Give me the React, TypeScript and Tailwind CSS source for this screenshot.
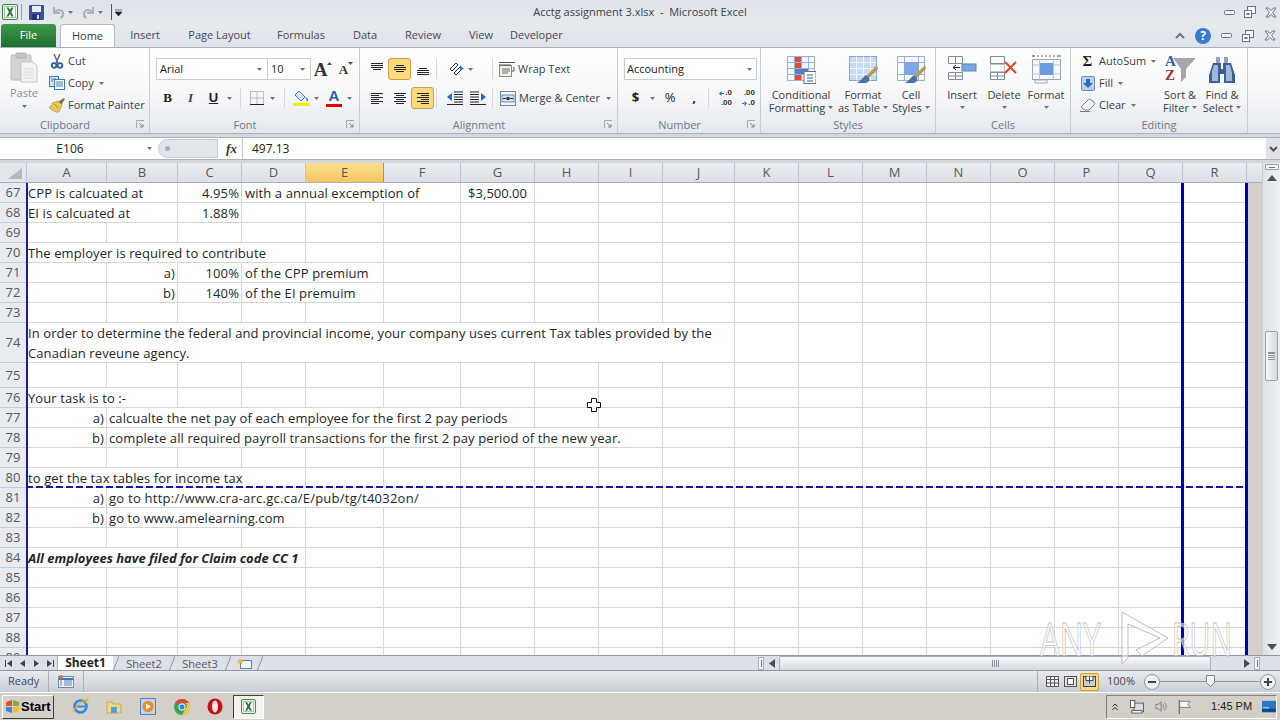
import type { ReactNode } from "react";

const COLS = ["A", "B", "C", "D", "E", "F", "G", "H", "I", "J", "K", "L", "M", "N", "O", "P", "Q", "R"];

type Cell = { text?: ReactNode; span?: number; align?: "r"; extra?: string };
type RowDef = { n: number; h: string; cells?: Record<number, Cell> };

const ROWS: RowDef[] = [
  {
    n: 67,
    h: "h-[20px]",
    cells: {
      0: { text: "CPP is calcuated at", span: 2 },
      2: { text: "4.95%", align: "r" },
      3: { text: "with a annual excemption of", span: 3, extra: "pl-[3px]" },
      6: {
        text: (
          <span className="flex justify-between pl-[6px] pr-[5px] tracking-normal">
            <span>$</span>
            <span>3,500.00</span>
          </span>
        ),
      },
    },
  },
  { n: 68, h: "h-[20px]", cells: { 0: { text: "EI is calcuated at", span: 2 }, 2: { text: "1.88%", align: "r" } } },
  { n: 69, h: "h-[20px]" },
  { n: 70, h: "h-[20px]", cells: { 0: { text: "The employer is required to contribute", span: 4 } } },
  {
    n: 71,
    h: "h-[20px]",
    cells: {
      0: { span: 1 },
      1: { text: "a)", align: "r" },
      2: { text: "100%", align: "r" },
      3: { text: "of the CPP premium", span: 2, extra: "pl-[3px]" },
    },
  },
  {
    n: 72,
    h: "h-[20px]",
    cells: {
      1: { text: "b)", align: "r" },
      2: { text: "140%", align: "r" },
      3: { text: "of the EI premuim", span: 2, extra: "pl-[3px]" },
    },
  },
  { n: 73, h: "h-[20px]" },
  {
    n: 74,
    h: "h-[40px]",
    cells: {
      0: {
        text: (
          <>
            In order to determine the federal and provincial income, your company uses current Tax tables provided by the
            <br />
            Canadian reveune agency.
          </>
        ),
        span: 10,
      },
    },
  },
  { n: 75, h: "h-[25px]" },
  { n: 76, h: "h-[20px]", cells: { 0: { text: "Your task is to :-", span: 2 } } },
  {
    n: 77,
    h: "h-[20px]",
    cells: {
      0: { text: "a)", align: "r" },
      1: { text: "calcualte the net pay of each employee for the first 2 pay periods", span: 6, extra: "pl-[2px]" },
    },
  },
  {
    n: 78,
    h: "h-[20px]",
    cells: {
      0: { text: "b)", align: "r" },
      1: { text: "complete all required payroll transactions for the first 2 pay period of the new year.", span: 8, extra: "pl-[2px]" },
    },
  },
  { n: 79, h: "h-[20px]" },
  { n: 80, h: "h-[20px]", cells: { 0: { text: "to get the tax tables for income tax", span: 4 } } },
  {
    n: 81,
    h: "h-[20px]",
    cells: {
      0: { text: "a)", align: "r" },
      1: { text: "go to http://www.cra-arc.gc.ca/E/pub/tg/t4032on/", span: 5, extra: "pl-[2px] tracking-[0.25px]" },
    },
  },
  {
    n: 82,
    h: "h-[20px]",
    cells: {
      0: { text: "b)", align: "r" },
      1: { text: "go to www.amelearning.com", span: 3, extra: "pl-[2px]" },
    },
  },
  { n: 83, h: "h-[20px]" },
  { n: 84, h: "h-[20px]", cells: { 0: { text: "All employees have filed for Claim code CC 1", span: 4, extra: "font-bold italic tracking-normal" } } },
  { n: 85, h: "h-[20px]" },
  { n: 86, h: "h-[20px]" },
  { n: 87, h: "h-[20px]" },
  { n: 88, h: "h-[20px]" },
  { n: 89, h: "h-[20px]" },
];

const GRID_COLS = "grid grid-rows-[minmax(0,1fr)] grid-cols-[27px_80px_71px_64px_64px_78px_77px_74px_64px_64px_72px_64px_64px_64px_64px_64px_64px_64px_64px]";

function Drop({ className = "" }: { className?: string }) {
  return (
    <svg width="5" height="3" viewBox="0 0 5 3" className={className}>
      <path d="M0 0h5L2.5 3z" fill="#6b7280" />
    </svg>
  );
}

function Launcher() {
  return (
    <svg width="9" height="9" viewBox="0 0 9 9">
      <path d="M.5 8V.5H8" fill="none" stroke="#a3abb5" />
      <path d="M3 3l4 4M7 4v3H4" fill="none" stroke="#7f8893" />
    </svg>
  );
}

function ExcelIcon({ size = 16 }: { size?: number }) {
  return (
    <svg width={size} height={size} viewBox="0 0 16 16">
      <rect x=".5" y=".5" width="15" height="15" rx="1.5" fill="#eef5ea" stroke="#3d7f45" />
      <rect x="2.5" y="2.5" width="11" height="11" fill="#fff" stroke="#9cc39e" />
      <path d="M4.5 3.5h2.2L8 6l1.4-2.5h2.1L9.2 8l2.4 4.5H9.4L8 9.8l-1.5 2.7H4.4L6.9 8z" fill="#1f7a31" />
    </svg>
  );
}

function SaveIcon() {
  return (
    <svg width="15" height="15" viewBox="0 0 15 15">
      <rect width="15" height="15" rx="1" fill="#3f4f9f" />
      <rect x="3" y="1" width="9" height="6" fill="#e6ecf6" />
      <rect x="3" y="9" width="8" height="6" fill="#2a3570" />
      <rect x="8" y="10" width="2" height="4" fill="#cbd5e8" />
    </svg>
  );
}

function UndoIcon({ flip = false }: { flip?: boolean }) {
  return (
    <svg width="13" height="13" viewBox="0 0 13 13" className={flip ? "-scale-x-100" : ""}>
      <path d="M2 1v6h6M2.5 6.5C5 3 11 3 11 8c0 2-1 3.5-2.5 4" fill="none" stroke="#a8b1bd" strokeWidth="2" />
    </svg>
  );
}

function WinMin() {
  return (
    <svg width="11" height="5" viewBox="0 0 11 5">
      <rect x=".5" y=".5" width="10" height="4" rx="1" fill="#f5f6f8" stroke="#6b7480" />
    </svg>
  );
}

function WinRestore() {
  return (
    <svg width="12" height="12" viewBox="0 0 12 12">
      <rect x="3.5" y=".5" width="8" height="7" fill="#f5f6f8" stroke="#6b7480" />
      <rect x=".5" y="4.5" width="7" height="7" fill="#f5f6f8" stroke="#6b7480" />
      <rect x="2.5" y="7" width="3" height="2" fill="#6b7480" />
    </svg>
  );
}

function WinClose() {
  return (
    <svg width="12" height="11" viewBox="0 0 12 11">
      <path d="M1 1h2.5L6 3.6 8.5 1H11L7.6 5.5 11 10H8.5L6 7.4 3.5 10H1l3.4-4.5z" fill="#f3f4f6" stroke="#6b7480" />
    </svg>
  );
}

function Lines({ rows, size = 14 }: { rows: [number, number, number][]; size?: number }) {
  return (
    <svg width={size} height={size} viewBox="0 0 14 14">
      {rows.map(([a, b, y], i) => (
        <path key={i} d={`M${a} ${y + 0.5}H${b}`} stroke="#22262b" />
      ))}
    </svg>
  );
}

const TOP: [number, number, number][] = [[1, 13, 1], [1, 13, 3], [1, 13, 5], [3, 11, 7]];
const MID: [number, number, number][] = [[3, 11, 3], [1, 13, 5], [1, 13, 7], [3, 11, 9]];
const BOT: [number, number, number][] = [[3, 11, 6], [1, 13, 8], [1, 13, 10], [1, 13, 12]];
const LEFT: [number, number, number][] = [[1, 13, 2], [1, 9, 4], [1, 13, 6], [1, 9, 8], [1, 13, 10], [1, 9, 12]];
const CENTER: [number, number, number][] = [[1, 13, 2], [3, 11, 4], [1, 13, 6], [3, 11, 8], [1, 13, 10], [3, 11, 12]];
const RIGHT: [number, number, number][] = [[1, 13, 2], [5, 13, 4], [1, 13, 6], [5, 13, 8], [1, 13, 10], [5, 13, 12]];

function PasteIcon() {
  return (
    <svg width="28" height="31" viewBox="0 0 28 31">
      <rect x="1" y="3" width="20" height="25" rx="1" fill="#d3d3d1" stroke="#bdbdbb" />
      <rect x="6" y="1" width="10" height="5" rx="1" fill="#c4c4c2" stroke="#b0b0ae" />
      <path d="M11 10h12l4 4v16H11z" fill="#f3f3f3" stroke="#c5c5c5" />
      <path d="M14 17h10M14 20h10M14 23h10M14 26h10" stroke="#d8d8d8" />
    </svg>
  );
}

function CutIcon() {
  return (
    <svg width="14" height="15" viewBox="0 0 14 15">
      <path d="M4 0l4 9M10 0L6 9" stroke="#5a6a80" strokeWidth="1.5" />
      <circle cx="4" cy="11.5" r="2.3" fill="none" stroke="#2c5ca8" strokeWidth="1.8" />
      <circle cx="10" cy="11.5" r="2.3" fill="none" stroke="#2c5ca8" strokeWidth="1.8" />
    </svg>
  );
}

function CopyIcon() {
  return (
    <svg width="16" height="14" viewBox="0 0 16 14">
      <rect x=".5" y=".5" width="9" height="10" fill="#dbe8f8" stroke="#3f76b8" />
      <rect x="5.5" y="3.5" width="10" height="10" fill="#fff" stroke="#3f76b8" />
      <path d="M7 6h7M7 8h7M7 10h7M2 3h5M2 5h2" stroke="#3f76b8" />
    </svg>
  );
}

function BrushIcon() {
  return (
    <svg width="16" height="15" viewBox="0 0 16 15">
      <path d="M9 4l3 3 4-6-1-1z" fill="#8a6a2c" />
      <path d="M3 5l6-2 4 4-3 7C6 15 1 11 0 9c2 0 3-2 3-4z" fill="#e8c65c" stroke="#a9873a" strokeWidth=".6" />
      <path d="M5 6l4 4" stroke="#a9873a" />
    </svg>
  );
}

function BordersIcon() {
  return (
    <svg width="14" height="14" viewBox="0 0 14 14">
      <path d="M.5 .5h13v13M.5 .5v13M7 .5v13M.5 7h13" stroke="#8a8a8a" strokeDasharray="1 1" fill="none" />
      <path d="M0 13.5h14" stroke="#222" />
    </svg>
  );
}

function FillIcon() {
  return (
    <svg width="17" height="16" viewBox="0 0 17 16">
      <path d="M6 1l6 6-4 4-6-6z" fill="#dbe7f5" stroke="#56739a" />
      <path d="M12 7c2 1 3 2 3 3.5 0 1-1 1-1.3 0-.3-1.3-1-2-1.7-3.5z" fill="#2d6bc0" />
      <rect y="13" width="17" height="3" fill="#f3f000" />
    </svg>
  );
}

function TextColorIcon() {
  return (
    <div className="relative flex h-[18px] w-[16px] flex-col items-center">
      <span className="text-[15px] font-bold leading-[14px] text-[#2f5fa8] [font-family:'Liberation_Sans',sans-serif]">A</span>
      <span className="mt-[1px] h-[4px] w-[16px] bg-[#e00000]" />
    </div>
  );
}

function OrientIcon() {
  return (
    <svg width="17" height="14" viewBox="0 0 17 14">
      <path d="M1 7l6-6 2 2-6 6zM5 11l6-6 2 2-6 6z" fill="none" stroke="#333" />
      <path d="M11 3l4 4-4 1z" fill="#3f76b8" />
    </svg>
  );
}

function WrapIcon() {
  return (
    <svg width="17" height="15" viewBox="0 0 17 15">
      <rect x=".5" y="3.5" width="12" height="11" fill="#f3efe1" stroke="#8a8a8a" />
      <path d="M0 .5h16M0 3h12" stroke="#555" />
      <path d="M3 7h8M3 9h8M3 11h6" stroke="#6f6f6f" />
      <path d="M15 5v4h-2" fill="none" stroke="#2c5ca8" />
    </svg>
  );
}

function IndentIcon({ flip = false }: { flip?: boolean }) {
  return (
    <svg width="16" height="14" viewBox="0 0 16 14" className={flip ? "-scale-x-100" : ""}>
      <path d="M7 1h9M7 3.5h9M7 6h9M7 8.5h9M7 11h9M0 13.5h16" stroke="#22262b" />
      <path d="M0 6l5-4v8z" fill="#2c6bc4" />
    </svg>
  );
}

function MergeIcon() {
  return (
    <svg width="16" height="15" viewBox="0 0 16 15">
      <rect x=".5" y=".5" width="15" height="14" fill="#f5f8fc" stroke="#6f8bb0" />
      <rect x="2" y="4" width="12" height="7" fill="#d5e3f5" stroke="#6f8bb0" />
      <path d="M3 7.5h3M13 7.5h-3" stroke="#223" />
      <rect x="6.5" y="6" width="3" height="3" fill="#333" />
    </svg>
  );
}

function DecimalIcon({ more }: { more: boolean }) {
  const arrow = (
    <svg width="5" height="5" viewBox="0 0 5 5" className="mr-[1px]">
      <path d={more ? "M0 2.5L2.5 0v5zM2 2h3v1H2z" : "M5 2.5L2.5 0v5zM0 2h3v1H0z"} fill="#2c6bc4" />
    </svg>
  );
  return (
    <span className="flex w-[16px] flex-col items-end text-[8px] font-bold leading-[10px] text-[#333] [font-family:'Liberation_Sans',sans-serif]">
      <span className="flex items-center">
        {more && arrow}
        {more ? ".0" : ".00"}
      </span>
      <span className="flex items-center">
        {!more && arrow}
        {more ? ".00" : ".0"}
      </span>
    </span>
  );
}

function GridBase({ children }: { children?: ReactNode }) {
  return (
    <svg width="29" height="30" viewBox="0 0 29 30">
      {children}
    </svg>
  );
}

function ConditionalIcon() {
  return (
    <GridBase>
      <path d="M.5 2.5h27v24H.5zM.5 8.5h27M.5 14.5h27M.5 20.5h27M7.5 2.5v24M14.5 2.5v24M21.5 2.5v24" fill="#f5f8fc" stroke="#9cb1cd" />
      <rect x="8" y="3" width="6" height="5" fill="#e04a3a" />
      <rect x="8" y="9" width="6" height="5" fill="#e04a3a" />
      <rect x="8" y="15" width="13" height="5" fill="#4f7fd0" />
      <rect x="8" y="21" width="6" height="5" fill="#e04a3a" />
      <rect x="17" y="17.5" width="12" height="12" fill="#fff" stroke="#6b7280" />
      <path d="M20 21h6M20 24h6M20 27h6" stroke="#2c5ca8" />
    </GridBase>
  );
}

function TableBrushIcon() {
  return (
    <GridBase>
      <rect x=".5" y="2.5" width="27" height="24" fill="#c7dbf4" stroke="#88a5cc" />
      <path d="M.5 8.5h27M.5 14.5h27M.5 20.5h27M7.5 2.5v24M14.5 2.5v24M21.5 2.5v24" stroke="#f3f7fc" />
      <path d="M28 11L17 22l2 3L29 15z" fill="#b59a5c" />
      <path d="M17 21c-3 2-4 5-9 8h9c3-1 4-3 3-5z" fill="#4e6fa8" />
    </GridBase>
  );
}

function CellStyleIcon() {
  return (
    <GridBase>
      <path d="M.5 2.5h27v24H.5zM.5 8.5h27M.5 20.5h27M7.5 2.5v24M21.5 2.5v24" fill="#f5f8fc" stroke="#9cb1cd" />
      <rect x="7" y="8" width="15" height="13" fill="#7fa6e4" />
      <path d="M28 11L17 22l2 3L29 15z" fill="#b59a5c" />
      <path d="M17 21c-3 2-4 5-9 8h9c3-1 4-3 3-5z" fill="#4e6fa8" />
    </GridBase>
  );
}

function InsertIcon() {
  return (
    <GridBase>
      <path d="M.5 2.5h14v7H.5zM.5 18.5h14v7H.5zM7.5 2.5v7M7.5 18.5v7M.5 22h14" fill="#fafbfd" stroke="#7f8c9c" />
      <rect x="14" y="10" width="14" height="7" fill="#7fa6dc" stroke="#5f82b5" />
      <path d="M12 13.5H5M8 11l-3 2.5L8 16" fill="none" stroke="#222" />
    </GridBase>
  );
}

function DeleteIcon() {
  return (
    <GridBase>
      <path d="M.5 2.5h14v7H.5zM.5 18.5h14v7H.5zM7.5 18.5v7M.5 22h14" fill="#fafbfd" stroke="#7f8c9c" />
      <rect x=".5" y="10.5" width="14" height="7" fill="#fff" stroke="#7f8c9c" strokeDasharray="1 1" />
      <path d="M15 8l11 11M26 8L15 19" stroke="#e0402e" strokeWidth="2" />
    </GridBase>
  );
}

function FormatIcon() {
  return (
    <GridBase>
      <path d="M1 1v2M28 1v2M1 2h27" stroke="#555" strokeDasharray="2 2" />
      <rect x=".5" y="5.5" width="28" height="20" fill="#f5f8fc" stroke="#9aa6b5" />
      <path d="M7.5 5.5v20M21.5 5.5v20M.5 11h28M.5 20h28" stroke="#bcc6d2" />
      <rect x="8" y="9" width="13" height="12" fill="#6f9be0" />
      <path d="M3 26h12v3H3z" fill="#f5f8fc" stroke="#9aa6b5" />
    </GridBase>
  );
}

function SumIcon() {
  return <span className="text-[15px] font-bold leading-none text-[#1f1f1f] [font-family:'Liberation_Serif',serif]">Σ</span>;
}

function FillDownIcon() {
  return (
    <svg width="14" height="15" viewBox="0 0 14 15">
      <rect x=".5" y=".5" width="13" height="14" rx="1" fill="#b9d0ee" stroke="#6b8db9" />
      <path d="M5 3h4v4h3l-5 5-5-5h3z" fill="#2e69c0" />
    </svg>
  );
}

function EraserIcon() {
  return (
    <svg width="16" height="14" viewBox="0 0 16 14">
      <path d="M1 9l7-7c1-1 2-1 3 0l3 2c1 1 1 2 0 3l-5 5H5z" fill="#f4f4f6" stroke="#757c87" />
      <path d="M0 13.5h10" stroke="#757c87" />
    </svg>
  );
}

function SortIcon() {
  return (
    <svg width="32" height="30" viewBox="0 0 32 30">
      <path d="M9 4h23l-10 11v8l-5 5V15z" fill="#a5a7aa" />
      <text x="1" y="12" fontSize="15" fontWeight="700" fill="#3660a8" fontFamily="Liberation Serif, serif">A</text>
      <text x="1" y="26" fontSize="15" fontWeight="700" fill="#8f3a36" fontFamily="Liberation Serif, serif">Z</text>
    </svg>
  );
}

function BinocularsIcon() {
  return (
    <svg width="28" height="28" viewBox="0 0 28 28">
      <path d="M8 1h4v6H8zM16 1h4v6h-4z" fill="#8ca3c4" />
      <path d="M5 7h8v6h2V7h8l4 12v8H16v-9h-4v9H1v-8z" fill="#3d5f95" />
      <path d="M6 9h4v16H4V15z" fill="#9fb7d8" />
      <path d="M18 9h4l2 8v8h-6z" fill="#9fb7d8" />
    </svg>
  );
}

function SmallBtn({ icon, label, arrow = false }: { icon: ReactNode; label: string; arrow?: boolean }) {
  return (
    <div className="flex h-[22px] items-center">
      <span className="flex w-[17px] justify-center">{icon}</span>
      <span className="ml-[3px] whitespace-nowrap">{label}</span>
      {arrow && <Drop className="ml-[5px]" />}
    </div>
  );
}

function BigBtn({ w, icon, top, bottom, arrow = true }: { w: string; icon: ReactNode; top: string; bottom?: string; arrow?: boolean }) {
  return (
    <div className={`flex flex-col items-center ${w}`}>
      <div className="flex h-[40px] items-end justify-center pb-[4px]">{icon}</div>
      <span className="h-[13px] whitespace-nowrap leading-[13px]">{top}</span>
      <span className="flex h-[13px] items-center gap-[3px] whitespace-nowrap leading-[13px]">
        {bottom}
        {arrow && <Drop />}
      </span>
    </div>
  );
}

function Group({ w, label, launcher = false, pad, children }: { w: string; label: string; launcher?: boolean; pad?: string; children: ReactNode }) {
  return (
    <div className={`relative flex flex-col border-r border-[#c6ccd4] ${w}`}>
      <div className={`h-[70px] ${pad ?? ""}`}>{children}</div>
      <div className={`relative flex h-[16px] items-center justify-center text-[#6e7887] ${launcher ? "pr-[19px]" : ""}`}>
        {label}
        {launcher && (
          <span className="absolute right-[4px] top-[3px] flex">
            <Launcher />
          </span>
        )}
      </div>
    </div>
  );
}

function Sep({ h = "h-[20px]", mx = "mx-[5px]" }: { h?: string; mx?: string }) {
  return <span className={`w-px bg-[#d5d9df] ${h} ${mx}`} />;
}

function Box({ w, on = false, children }: { w: string; on?: boolean; children: ReactNode }) {
  return (
    <span className={`flex h-[22px] items-center justify-center ${w} ${on ? "rounded-[3px] border border-[#d0a040] bg-[#fbd97f]" : ""}`}>
      {children}
    </span>
  );
}

function Ribbon() {
  return (
    <div className="flex h-[87px] border-b border-t border-[#aab2bc] bg-gradient-to-b from-[#ffffff] via-[#f7f8fa] to-[#e4e8ed] text-[11px] text-[#3a3f45]">
      <Group w="w-[150px]" label="Clipboard" launcher pad="flex">
        <div className="flex w-[48px] flex-col items-center pt-[4px] text-[#8a8f96]">
          <PasteIcon />
          <span className="mt-[3px] leading-[14px]">Paste</span>
          <Drop className="mt-[5px]" />
        </div>
        <div className="flex flex-col pt-[2px]">
          <SmallBtn icon={<CutIcon />} label="Cut" />
          <SmallBtn icon={<CopyIcon />} label="Copy" arrow />
          <SmallBtn icon={<BrushIcon />} label="Format Painter" />
        </div>
      </Group>

      <Group w="w-[210px]" label="Font" launcher pad="flex flex-col pl-[6px] pt-[10px]">
        <div className="flex h-[22px] items-center">
          <div className="flex h-[22px] w-[112px] items-center justify-between border border-[#c8ccd2] bg-white pl-[3px] pr-[5px] text-[#222]">
            Arial
            <Drop />
          </div>
          <div className="-ml-px flex h-[22px] w-[44px] items-center justify-between border border-[#c8ccd2] bg-white pl-[3px] pr-[5px] text-[#222]">
            10
            <Drop />
          </div>
          <span className="flex w-[24px] items-start justify-center text-[19px] font-bold leading-none text-[#333] [font-family:'Liberation_Serif',serif]">
            A
            <svg width="5" height="3" viewBox="0 0 5 3" className="mt-[2px]">
              <path d="M0 3h5L2.5 0z" fill="#4a5058" />
            </svg>
          </span>
          <span className="flex w-[22px] items-start justify-center text-[13px] font-bold leading-none text-[#333] [font-family:'Liberation_Serif',serif]">
            A
            <svg width="5" height="3" viewBox="0 0 5 3" className="mt-[-1px]">
              <path d="M0 0h5L2.5 3z" fill="#4a5058" />
            </svg>
          </span>
        </div>
        <div className="mt-[7px] flex h-[22px] items-center">
          <Box w="w-[23px]">
            <b className="text-[13px] text-[#222] [font-family:'Liberation_Serif',serif]">B</b>
          </Box>
          <Box w="w-[23px]">
            <i className="text-[13px] font-bold text-[#444] [font-family:'Liberation_Serif',serif]">I</i>
          </Box>
          <Box w="w-[23px]">
            <b className="text-[13px] text-[#222] underline [font-family:'Liberation_Sans',sans-serif]">U</b>
          </Box>
          <Drop className="ml-[2px]" />
          <Sep mx="ml-[8px] mr-[5px]" />
          <span className="flex w-[22px] justify-center">
            <BordersIcon />
          </span>
          <Drop className="ml-[2px]" />
          <Sep mx="ml-[9px] mr-[4px]" />
          <span className="flex w-[24px] justify-center">
            <FillIcon />
          </span>
          <Drop className="ml-[1px]" />
          <span className="ml-[5px] flex w-[20px] justify-center">
            <TextColorIcon />
          </span>
          <Drop className="ml-[3px]" />
        </div>
      </Group>

      <Group w="w-[258px]" label="Alignment" launcher pad="flex flex-col pl-[5px] pt-[10px]">
        <div className="flex h-[22px] items-center">
          <Box w="w-[23px]">
            <Lines rows={TOP} />
          </Box>
          <Box w="w-[23px]" on>
            <Lines rows={MID} />
          </Box>
          <Box w="w-[23px]">
            <Lines rows={BOT} />
          </Box>
          <Sep mx="ml-[2px] mr-[12px]" />
          <OrientIcon />
          <Drop className="ml-[2px]" />
          <Sep mx="ml-[19px] mr-[6px]" />
          <span className="flex items-center gap-[2px]">
            <WrapIcon />
            <span>Wrap Text</span>
          </span>
        </div>
        <div className="mt-[7px] flex h-[22px] items-center">
          <Box w="w-[23px]">
            <Lines rows={LEFT} />
          </Box>
          <Box w="w-[23px]">
            <Lines rows={CENTER} />
          </Box>
          <Box w="w-[23px]" on>
            <Lines rows={RIGHT} />
          </Box>
          <Sep mx="ml-[2px] mr-[10px]" />
          <IndentIcon />
          <span className="ml-[7px]">
            <IndentIcon flip />
          </span>
          <Sep mx="ml-[6px] mr-[7px]" />
          <span className="flex items-center gap-[3px]">
            <MergeIcon />
            <span>Merge &amp; Center</span>
            <Drop className="ml-[3px]" />
          </span>
        </div>
      </Group>

      <Group w="w-[143px]" label="Number" launcher pad="flex flex-col pl-[6px] pt-[10px]">
        <div className="flex h-[22px] w-[133px] items-center justify-between border border-[#c8ccd2] bg-white pl-[2px] pr-[4px] text-[#222]">
          Accounting
          <Drop />
        </div>
        <div className="mt-[7px] flex h-[22px] items-center text-[#222]">
          <b className="w-[23px] text-center text-[13px]">$</b>
          <Drop className="ml-[3px]" />
          <b className="ml-[5px] w-[20px] text-center text-[13px] font-normal">%</b>
          <b className="ml-[4px] w-[20px] text-center text-[13px]">,</b>
          <Sep mx="ml-[4px] mr-[7px]" />
          <DecimalIcon more />
          <span className="ml-[7px]">
            <DecimalIcon more={false} />
          </span>
        </div>
      </Group>

      <Group w="w-[175px]" label="Styles" pad="flex pl-[6px]">
        <BigBtn w="w-[68px]" icon={<ConditionalIcon />} top="Conditional" bottom="Formatting" />
        <BigBtn w="w-[56px]" icon={<TableBrushIcon />} top="Format" bottom="as Table" />
        <BigBtn w="w-[40px]" icon={<CellStyleIcon />} top="Cell" bottom="Styles" />
      </Group>

      <Group w="w-[135px]" label="Cells" pad="flex pl-[5px]">
        <BigBtn w="w-[42px]" icon={<InsertIcon />} top="Insert" />
        <BigBtn w="w-[42px]" icon={<DeleteIcon />} top="Delete" />
        <BigBtn w="w-[42px]" icon={<FormatIcon />} top="Format" />
      </Group>

      <Group w="w-[177px]" label="Editing" pad="flex pl-[8px]">
        <div className="flex w-[81px] flex-col pt-[2px]">
          <SmallBtn icon={<SumIcon />} label="AutoSum" arrow />
          <SmallBtn icon={<FillDownIcon />} label="Fill" arrow />
          <SmallBtn icon={<EraserIcon />} label="Clear" arrow />
        </div>
        <BigBtn w="w-[40px]" icon={<SortIcon />} top="Sort &" bottom="Filter" />
        <div className="w-[2px]" />
        <BigBtn w="w-[40px]" icon={<BinocularsIcon />} top="Find &" bottom="Select" />
      </Group>
    </div>
  );
}

function Sheet() {
  return (
    <div className="relative flex-1 overflow-hidden bg-[#d4d0c8] text-[13px] text-[#22262b]">
      <div className={`${GRID_COLS} h-[20px] border-b border-[#a9b0b9] bg-gradient-to-b from-[#eaedf1] to-[#dce0e6]`}>
        <div className="flex items-end justify-end border-r border-[#bcc3cc] bg-[#e3e6eb] pb-[3px] pr-[4px]">
          <svg width="16" height="11" viewBox="0 0 16 11">
            <path d="M16 0v11H2z" fill="#b3b9c1" />
          </svg>
        </div>
        {COLS.map((c) => (
          <div
            key={c}
            className={
              c === "E"
                ? "flex items-center justify-center border-r border-[#c28f2e] bg-gradient-to-b from-[#fbe08e] to-[#f5c45e] text-[#555]"
                : "flex items-center justify-center border-r border-[#bcc3cc] text-[#55595f]"
            }
          >
            {c}
          </div>
        ))}
      </div>
      {ROWS.map((r) => (
        <div key={r.n} className={`relative ${GRID_COLS} ${r.h}`}>
          <div className="flex items-center justify-center border-b border-r border-[#c5cbd3] bg-[#e8ebef] pt-[1px] text-[#55595f]">{r.n}</div>
          {COLS.map((_, i) => {
            const cell = r.cells?.[i];
            const span = cell?.span ?? 1;
            let covered = false;
            for (let j = 0; j < i; j++) {
              const prev = r.cells?.[j];
              if (prev && j + (prev.span ?? 1) > i) covered = true;
            }
            if (covered) return null;
            return (
              <div
                key={i}
                style={span > 1 ? { gridColumn: `span ${span}` } : undefined}
                className={`flex flex-col justify-center whitespace-nowrap border-b border-r border-[#d6d6d6] bg-white pl-[1px] pr-[2px] leading-[20px] tracking-[0.1px] ${cell?.align === "r" ? "text-right" : ""} ${cell?.extra ?? ""}`}
              >
                <div>{cell?.text}</div>
              </div>
            );
          })}
          {r.n === 80 && (
            <div className="absolute bottom-0 left-[26px] h-[2px] w-[1220px] [background:repeating-linear-gradient(90deg,#1a1a9c_0_7px,transparent_7px_10px)]" />
          )}
        </div>
      ))}
      {/* page break lines */}
      <div className="absolute bottom-0 left-[26px] top-[20px] w-[2px] bg-[#1a1a9c]" />
      <div className="absolute bottom-0 left-[1181px] top-[20px] w-[3px] bg-[#0000c0]" />
      <div className="absolute bottom-0 left-[1245px] top-[20px] w-[3px] bg-[#0000c0]" />
    </div>
  );
}

function VScroll() {
  return (
    <div className="flex w-[18px] flex-col items-center border-l border-[#c9ced5] bg-gradient-to-r from-[#dfe3e8] to-[#eef0f3]">
      <span className="mt-[1px] flex h-[6px] w-[14px] items-center justify-center rounded-[1px] border border-[#9aa3ad] bg-[#f2f4f7]">
        <span className="h-px w-[6px] bg-[#777]" />
      </span>
      <svg width="10" height="6" viewBox="0 0 10 6" className="mt-[5px]">
        <path d="M0 6l5-6 5 6z" fill="#4a5058" />
      </svg>
      <div className="mt-[150px] flex h-[50px] w-[13px] items-center justify-center rounded-[2px] border border-[#9aa3ad] bg-gradient-to-r from-[#f7f8fa] to-[#d5dae1]">
        <span className="h-[8px] w-[7px] border-y border-[#8a929c] [background:repeating-linear-gradient(#8a929c_0_1px,transparent_1px_2px)]" />
      </div>
      <div className="flex-1" />
      <svg width="10" height="6" viewBox="0 0 10 6" className="mb-[5px]">
        <path d="M0 0l5 6 5-6z" fill="#4a5058" />
      </svg>
    </div>
  );
}

function NavArrow({ d }: { d: string }) {
  return (
    <svg width="9" height="9" viewBox="0 0 9 9">
      <path d={d} fill="#444" />
    </svg>
  );
}

function TabSlash() {
  return (
    <svg width="6" height="15" viewBox="0 0 6 15">
      <path d="M0 15L6 0" stroke="#8f98a3" />
    </svg>
  );
}

function SheetTabs() {
  return (
    <div className="flex h-[15px] items-center border-t border-[#8f98a3] bg-[#dde1e7] text-[11px] text-[#555b63]">
      <div className="flex h-full w-[58px] items-center gap-[5px] border-r border-[#a9b0b9] pl-[4px]">
        <NavArrow d="M1 1h1v7H1zM8 1v7L3 4.5z" />
        <NavArrow d="M7 1v7L2 4.5z" />
        <NavArrow d="M2 1v7l5-3.5z" />
        <NavArrow d="M8 1h-1v7h1zM1 1v7l5-3.5z" />
      </div>
      <div className="flex h-full w-[55px] items-center justify-center bg-white text-[12px] font-bold leading-none text-[#222]">Sheet1</div>
      <TabSlash />
      <div className="flex w-[50px] justify-center leading-none">Sheet2</div>
      <TabSlash />
      <div className="flex w-[50px] justify-center leading-none">Sheet3</div>
      <TabSlash />
      <div className="flex w-[26px] justify-center">
        <svg width="15" height="11" viewBox="0 0 15 11">
          <rect x="3.5" y="2.5" width="11" height="8" fill="#eef3f9" stroke="#5f82b5" />
          <path d="M3 0l1 2 2-1-1 2 2 1-2 .5 .5 2L3 5 1 6l.5-2L0 3l2-.5z" fill="#e9b640" />
        </svg>
      </div>
      <TabSlash />
      <div className="flex-1" />
      <span className="flex h-[13px] w-[6px] items-center justify-center border border-[#a9b0b9] bg-[#f4f5f7]">
        <span className="h-[7px] w-px bg-[#777]" />
      </span>
      <svg width="6" height="9" viewBox="0 0 6 9" className="ml-[5px]">
        <path d="M6 0v9L0 4.5z" fill="#4a5058" />
      </svg>
      <div className="ml-[4px] flex h-[15px] w-[432px] items-center justify-center rounded-[2px] border border-[#a9b0b9] bg-gradient-to-b from-[#f7f8fa] to-[#d5dae1]">
        <span className="h-[7px] w-[7px] [background:repeating-linear-gradient(90deg,#8a929c_0_1px,transparent_1px_2px)]" />
      </div>
      <div className="w-[33px]" />
      <svg width="6" height="9" viewBox="0 0 6 9">
        <path d="M0 0v9l6-4.5z" fill="#4a5058" />
      </svg>
      <span className="ml-[4px] mr-[20px] flex h-[13px] w-[6px] items-center justify-center border border-[#a9b0b9] bg-[#f4f5f7]">
        <span className="h-[7px] w-px bg-[#777]" />
      </span>
    </div>
  );
}

function StatusBar() {
  return (
    <div className="flex h-[22px] items-center border-t border-[#8f98a3] bg-gradient-to-b from-[#e8ebef] to-[#c8ced6] text-[11px] text-[#444b54]">
      <span className="w-[48px] pl-[8px]">Ready</span>
      <span className="h-[22px] w-px bg-[#a9b0b9]" />
      <span className="flex w-[34px] justify-center">
        <svg width="16" height="13" viewBox="0 0 16 13">
          <rect x=".5" y="1.5" width="15" height="11" fill="#eef3f9" stroke="#6f8bb0" />
          <path d="M1 4h14" stroke="#3f76b8" strokeWidth="2" />
          <path d="M6 6h8M6 8h8M6 10h8M2 6h2M2 8h2M2 10h2" stroke="#5f82b5" />
          <circle cx="3" cy="2" r="2" fill="#e07030" />
        </svg>
      </span>
      <span className="h-[22px] w-px bg-[#a9b0b9]" />
      <div className="flex-1" />
      <span className="h-[22px] w-px bg-[#a9b0b9]" />
      <div className="ml-[8px] flex items-center">
        <svg width="13" height="11" viewBox="0 0 13 11">
          <path d="M.5 .5h12v10H.5zM.5 3.5h12M.5 7h12M4.5 .5v10M8.5 .5v10" fill="#f5f6f8" stroke="#555" />
        </svg>
        <svg width="13" height="11" viewBox="0 0 13 11" className="ml-[5px]">
          <rect x=".5" y=".5" width="12" height="10" fill="#dfe3e8" stroke="#555" />
          <rect x="3.5" y="2.5" width="6" height="6" fill="#f5f6f8" stroke="#555" />
        </svg>
        <span className="ml-[3px] flex h-[18px] w-[19px] items-center justify-center rounded-[2px] border border-[#d0a040] bg-[#f9d77e]">
          <svg width="13" height="11" viewBox="0 0 13 11">
            <rect x=".5" y=".5" width="12" height="10" fill="#c9ccd1" stroke="#444" />
            <path d="M6.5 .5v7M3 .5v4h7v-4" fill="#f5f6f8" stroke="#444" />
          </svg>
        </span>
      </div>
      <span className="ml-[6px] w-[32px] text-center">100%</span>
      <svg width="16" height="16" viewBox="0 0 16 16" className="ml-[7px]">
        <circle cx="8" cy="8" r="7.5" fill="#eef0f3" stroke="#8f98a3" />
        <path d="M4 8h8" stroke="#444" strokeWidth="2" />
      </svg>
      <div className="relative h-px w-[100px] bg-[#8f98a3]">
        <svg width="9" height="12" viewBox="0 0 9 12" className="absolute left-[46px] top-[-6px]">
          <path d="M.5 .5h8v7L4.5 11.5 .5 7.5z" fill="#f5f6f8" stroke="#7a828c" />
        </svg>
      </div>
      <svg width="16" height="16" viewBox="0 0 16 16">
        <circle cx="8" cy="8" r="7.5" fill="#eef0f3" stroke="#8f98a3" />
        <path d="M4 8h8M8 4v8" stroke="#444" strokeWidth="2" />
      </svg>
      <div className="w-[4px]" />
    </div>
  );
}

function Taskbar() {
  return (
    <div className="flex h-[28px] items-center border-t border-white bg-[#d4d0c8]">
      <div className="ml-[2px] flex h-[24px] w-[52px] items-center gap-[1px] border border-b-[#404040] border-l-white border-r-[#404040] border-t-white bg-[#d4d0c8] pl-[2px] text-[13px] font-bold text-black [font-family:'Liberation_Sans',sans-serif]">
        <svg width="15" height="15" viewBox="0 0 15 15" className="shrink-0">
          <path d="M1 3l6-2v6H1z" fill="#e2572a" />
          <path d="M8 1l6 2v4H8z" fill="#7fb23c" />
          <path d="M1 8h6v6l-6-2z" fill="#3f84d8" />
          <path d="M8 8h6v4l-6 2z" fill="#f0bd30" />
        </svg>
        Start
      </div>
      <div className="ml-[10px] flex w-[167px] items-center">
        <span className="flex w-[33px] justify-center">
          <svg width="17" height="17" viewBox="0 0 17 17">
            <circle cx="8.5" cy="8.5" r="6" fill="none" stroke="#2f8ae0" strokeWidth="2.5" />
            <path d="M4 8.5h9" stroke="#2f8ae0" strokeWidth="2" />
            <path d="M1 14c3-6 9-11 15-13-1 2-2 3-4 4" fill="none" stroke="#e9b030" strokeWidth="1.3" />
          </svg>
        </span>
        <span className="flex w-[34px] justify-center">
          <svg width="16" height="15" viewBox="0 0 16 15">
            <path d="M1 3h5l1 2h8v9H1z" fill="#f0d78c" stroke="#c6a85a" />
            <path d="M5 8h6v6H5z" fill="#4fa3d8" />
          </svg>
        </span>
        <span className="flex w-[34px] justify-center">
          <svg width="16" height="17" viewBox="0 0 16 17">
            <rect x=".5" y=".5" width="15" height="16" fill="#bcd4ee" stroke="#4f84c0" />
            <circle cx="8" cy="8.5" r="5.5" fill="#f08a1e" />
            <path d="M6 5.5v6l5-3z" fill="#fff" />
          </svg>
        </span>
        <span className="flex w-[33px] justify-center">
          <svg width="16" height="16" viewBox="0 0 16 16">
            <circle cx="8" cy="8" r="8" fill="#3aa655" />
            <path d="M8 0a8 8 0 0 1 7 4H8a4 4 0 0 0-4 2L1.5 3A8 8 0 0 1 8 0z" fill="#e0483a" />
            <path d="M15 4a8 8 0 0 1-7 12l3.5-6a4 4 0 0 0 0-6z" fill="#f5c93a" />
            <circle cx="8" cy="8" r="3.2" fill="#3f7fe0" stroke="#fff" />
          </svg>
        </span>
        <span className="flex w-[33px] justify-center">
          <svg width="16" height="17" viewBox="0 0 16 17">
            <ellipse cx="8" cy="8.5" rx="7.5" ry="8" fill="#c9101a" />
            <ellipse cx="8" cy="8.5" rx="3" ry="6" fill="#f8e8e8" />
          </svg>
        </span>
      </div>
      <div className="ml-[2px] flex h-[24px] w-[31px] items-center justify-center border border-b-white border-l-[#404040] border-r-white border-t-[#404040] bg-[#f4f2ee]">
        <ExcelIcon size={15} />
      </div>
      <div className="flex-1" />
      <div className="mr-[3px] flex h-[24px] w-[171px] items-center border border-b-white border-l-[#808080] border-r-white border-t-[#808080] text-[11px] text-[#222] [font-family:'Liberation_Sans',sans-serif]">
        <svg width="7" height="8" viewBox="0 0 7 8" className="ml-[5px]">
          <path d="M.5 3.5l3-3 3 3M.5 7.5l3-3 3 3" fill="none" stroke="#111" />
        </svg>
        <svg width="16" height="16" viewBox="0 0 16 16" className="ml-[12px]">
          <rect x="4.5" y="3.5" width="11" height="10" fill="#d8dbe0" stroke="#555" />
          <rect x=".5" y=".5" width="5" height="8" fill="#f5f5f5" stroke="#555" />
          <path d="M2 12h12v3H2z" fill="#eee" stroke="#555" />
        </svg>
        <svg width="15" height="15" viewBox="0 0 15 15" className="ml-[11px]">
          <path d="M1 5h3l3-3v11l-3-3H1z" fill="#cfd3d9" stroke="#777" />
          <path d="M9 5a4 4 0 0 1 0 5M11 3a7 7 0 0 1 0 9" fill="none" stroke="#777" />
        </svg>
        <svg width="16" height="16" viewBox="0 0 16 16" className="ml-[10px]">
          <path d="M1.5 0v16" stroke="#666" strokeWidth="1.3" />
          <path d="M2 1.5h12l-3 3 3 4H2z" fill="#f4f4f4" stroke="#777" />
        </svg>
        <span className="ml-[19px] w-[41px] whitespace-nowrap">1:45 PM</span>
        <svg width="16" height="13" viewBox="0 0 16 13" className="ml-[10px]">
          <rect width="16" height="13" fill="#2a78c8" />
          <path d="M0 9h16v4H0z" fill="#144a90" />
          <path d="M1 8h7" stroke="#dff" />
        </svg>
      </div>
    </div>
  );
}

export default function App() {
  return (
    <div className="relative flex h-[720px] w-[1280px] flex-col overflow-hidden bg-[#d4d9df] text-[11px] [font-family:'Open_Sans',sans-serif]">
      {/* title bar */}
      <div className="relative flex h-[24px] items-center bg-gradient-to-b from-[#dfe4ea] to-[#e6e9ee] pl-[2px]">
        <ExcelIcon />
        <span className="ml-[3px] h-[16px] w-px bg-[#9aa3ad]" />
        <span className="ml-[7px]">
          <SaveIcon />
        </span>
        <span className="ml-[8px]">
          <UndoIcon />
        </span>
        <Drop className="ml-[3px]" />
        <span className="ml-[9px]">
          <UndoIcon flip />
        </span>
        <Drop className="ml-[3px]" />
        <span className="ml-[8px] h-[16px] w-px bg-[#555]" />
        <svg width="7" height="7" viewBox="0 0 7 7" className="ml-[3px]">
          <path d="M0 1h7M0 3h7L3.5 7z" stroke="#222" fill="#222" strokeWidth=".6" />
        </svg>
        <span className="absolute left-0 right-0 top-[4px] text-center leading-[16px] text-[#3c4149]">Acctg assignment 3.xlsx&nbsp; -&nbsp; Microsoft Excel</span>
        <div className="ml-auto flex items-center gap-[9px] pr-[3px]">
          <WinMin />
          <WinRestore />
          <WinClose />
        </div>
      </div>

      {/* tabs */}
      <div className="flex h-[23px] items-end bg-gradient-to-b from-[#e6e9ee] to-[#dfe4ea] text-[#444b54]">
        <div className="ml-[1px] flex h-[23px] w-[55px] items-center justify-center rounded-t-[3px] bg-gradient-to-b from-[#3f9a4a] to-[#1c6e2f] text-white">File</div>
        <div className="ml-[4px] flex h-[23px] w-[55px] items-center justify-center rounded-t-[3px] border border-b-0 border-[#b4bbc4] bg-white text-[#333]">Home</div>
        <div className="flex h-[23px] items-center">
          <span className="w-[60px] text-center">Insert</span>
          <span className="ml-[5px] w-[79px] text-center">Page Layout</span>
          <span className="ml-[3px] w-[78px] text-center">Formulas</span>
          <span className="w-[50px] text-center">Data</span>
          <span className="ml-[4px] w-[58px] text-center">Review</span>
          <span className="w-[58px] text-center">View</span>
          <span className="w-[50px] text-center">Developer</span>
        </div>
        <div className="ml-auto flex h-[23px] items-center gap-[10px] pr-[4px]">
          <svg width="10" height="7" viewBox="0 0 10 7">
            <path d="M1 6l4-4 4 4" fill="none" stroke="#6b7480" strokeWidth="2" />
          </svg>
          <span className="flex h-[16px] w-[16px] items-center justify-center rounded-full bg-[#3a7bd0] text-[12px] font-bold text-white">?</span>
          <WinMin />
          <WinRestore />
          <WinClose />
        </div>
      </div>

      <Ribbon />

      {/* formula bar */}
      <div className="mt-[3px] flex h-[23px] items-center border-y border-[#aab2bc] bg-white text-[12px] text-[#222]">
        <div className="flex h-full w-[158px] items-center">
          <span className="w-[140px] text-center">E106</span>
          <Drop className="ml-[7px]" />
        </div>
        <div className="flex h-[19px] w-[60px] items-center rounded-l-full border border-[#c8ccd2] bg-[#e2e5ea] pl-[6px]">
          <span className="h-[5px] w-[5px] rounded-full bg-[#a9b0b9]" />
        </div>
        <div className="flex h-full w-[25px] items-center justify-center border-r border-[#c8ccd2] pl-[3px] text-[13px] font-bold italic text-[#333] [font-family:'Liberation_Serif',serif]">fx</div>
        <span className="ml-[9px]">497.13</span>
        <div className="ml-auto flex h-full w-[14px] items-center justify-center bg-[#dfe3e8]">
          <svg width="9" height="6" viewBox="0 0 9 6">
            <path d="M1 1l3.5 3.5L8 1" fill="none" stroke="#555" strokeWidth="2" />
          </svg>
        </div>
      </div>

      <div className="mt-[3px] flex h-[492px]">
        <Sheet />
        <VScroll />
      </div>
      <SheetTabs />
      <StatusBar />
      <Taskbar />

      {/* mouse pointer */}
      <svg width="14" height="14" viewBox="0 0 14 14" className="absolute left-[587px] top-[398px]">
        <path d="M4.5 .5h5v4h4v5h-4v4h-5v-4h-4v-5h4z" fill="#fff" stroke="#111" />
      </svg>

      {/* watermark */}
      <div className="pointer-events-none absolute left-[1040px] top-[610px] flex h-[56px] items-center text-[46px] font-normal text-white/60 [-webkit-text-stroke:1px_rgba(175,175,175,0.75)]">
        <span className="w-[66px] origin-left scale-x-[0.68] whitespace-nowrap">ANY</span>
        <svg width="66" height="56" viewBox="0 0 66 56">
          <path d="M16 2v52l6-6V14l32 14-24 12 6 6 26-18z" fill="rgba(255,255,255,.5)" stroke="rgba(175,175,175,.8)" />
        </svg>
        <span className="w-[62px] origin-left scale-x-[0.62] whitespace-nowrap">RUN</span>
      </div>
    </div>
  );
}
